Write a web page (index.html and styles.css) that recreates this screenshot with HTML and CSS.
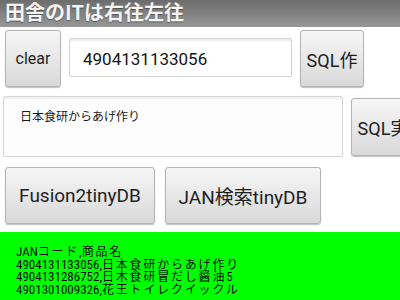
FILE: index.html
```html
<!DOCTYPE html>
<html lang="ja">
<head>
<meta charset="utf-8">
<title>田舎のITは右往左往</title>
<link rel="stylesheet" href="styles.css">
</head>
<body>
<header class="titlebar">田舎のITは右往左往</header>
<main class="content">
  <div class="row row-1">
    <button class="btn btn-clear">clear</button>
    <input class="field" type="text" value="4904131133056">
    <button class="btn btn-sql">SQL作</button>
  </div>
  <div class="row row-2">
    <textarea class="area">日本食研からあげ作り</textarea>
    <button class="btn btn-sql btn-exec">SQL実</button>
  </div>
  <div class="row row-3">
    <button class="btn btn-big btn-fusion">Fusion2tinyDB</button>
    <button class="btn btn-big btn-jan">JAN検索tinyDB</button>
  </div>
</main>
<section class="result">
  <div class="line">JAN<span class="jp">コード</span>,<span class="jp">商品名</span></div>
  <div class="line">4904131133056,<span class="jp">日本食研からあげ作り</span></div>
  <div class="line">4904131286752,<span class="jp">日木食研冒だし醤油</span>5</div>
  <div class="line">4901301009326,<span class="jp">花王トイレクイックル</span></div>
</section>
</body>
</html>
```
FILE: styles.css
```css
html, body {
  margin: 0;
  padding: 0;
  width: 400px;
  height: 300px;
  overflow: hidden;
  background: #ffffff;
  font-family: Roboto, "Noto Sans CJK JP", sans-serif;
}

.titlebar {
  height: 27px;
  box-sizing: border-box;
  padding: 0 0 0 5px;
  background: linear-gradient(#6c6c6c, #979797);
  color: #f4f4f4;
  font-family: "Noto Sans CJK JP", sans-serif;
  font-weight: bold;
  font-size: 20px;
  line-height: 24px;
  white-space: nowrap;
  text-shadow: 0 1px 1px rgba(0,0,0,0.35);
}

.content {
  padding-top: 3px;
}

.row {
  display: flex;
  align-items: flex-start;
  white-space: nowrap;
}

.btn {
  box-sizing: border-box;
  margin: 0;
  padding: 0;
  border: 1px solid #b4b4b4;
  border-radius: 3px;
  background: linear-gradient(#f6f6f6, #d9d9d9);
  box-shadow: 0 1px 1px rgba(0,0,0,0.25);
  color: #1e1e1e;
  font-family: Roboto, "Noto Sans CJK JP", sans-serif;
  font-size: 18px;
  overflow: hidden;
  white-space: nowrap;
  flex: none;
}

.row-1 {
  padding-left: 5px;
  height: 57px;
}

.btn-clear {
  width: 56px;
  height: 57px;
  font-size: 16px;
}

.field {
  box-sizing: border-box;
  width: 223px;
  height: 39px;
  margin: 8px 8px 0 8px;
  padding: 2px 0 0 13px;
  border: 1px solid #d4d4d4;
  border-radius: 2px;
  background: #ffffff;
  box-shadow: inset 0 2px 2px rgba(0,0,0,0.07);
  color: #141414;
  font-family: Roboto, sans-serif;
  font-size: 17px;
  outline: none;
}

.btn-sql {
  width: 64px;
  height: 57px;
}

.row-2 {
  margin-top: 9px;
  padding-left: 3px;
  height: 61px;
}

.area {
  box-sizing: border-box;
  width: 340px;
  height: 61px;
  margin: 0 8px 0 0;
  padding: 11px 0 0 16px;
  border: 1px solid #d8d8d8;
  border-radius: 2px;
  background: #fdfdfd;
  box-shadow: inset 0 2px 2px rgba(0,0,0,0.06);
  color: #1a1a1a;
  font-family: "Noto Sans CJK JP", sans-serif;
  font-size: 12px;
  line-height: 16px;
  resize: none;
  outline: none;
  overflow: hidden;
  flex: none;
}

.btn-exec {
  margin-top: 2px;
  height: 58px;
}

.row-3 {
  margin-top: 10px;
  padding-left: 5px;
  gap: 10px;
  height: 57px;
}

.btn-big {
  height: 57px;
  font-size: 19px;
}

.btn-fusion {
  width: 150px;
}

.btn-jan {
  width: 156px;
}

.result {
  margin-top: 8px;
  height: 68px;
  box-sizing: border-box;
  padding: 13px 0 0 16px;
  background: #00ff00;
  color: #0a0a0a;
  font-family: "Liberation Sans Narrow", "Roboto Condensed", Roboto, sans-serif;
  font-size: 13px;
  line-height: 11.7px;
  white-space: nowrap;
}

.jp {
  font-family: "Noto Sans CJK JP", sans-serif;
  font-size: 12px;
  letter-spacing: 1.8px;
}
```
